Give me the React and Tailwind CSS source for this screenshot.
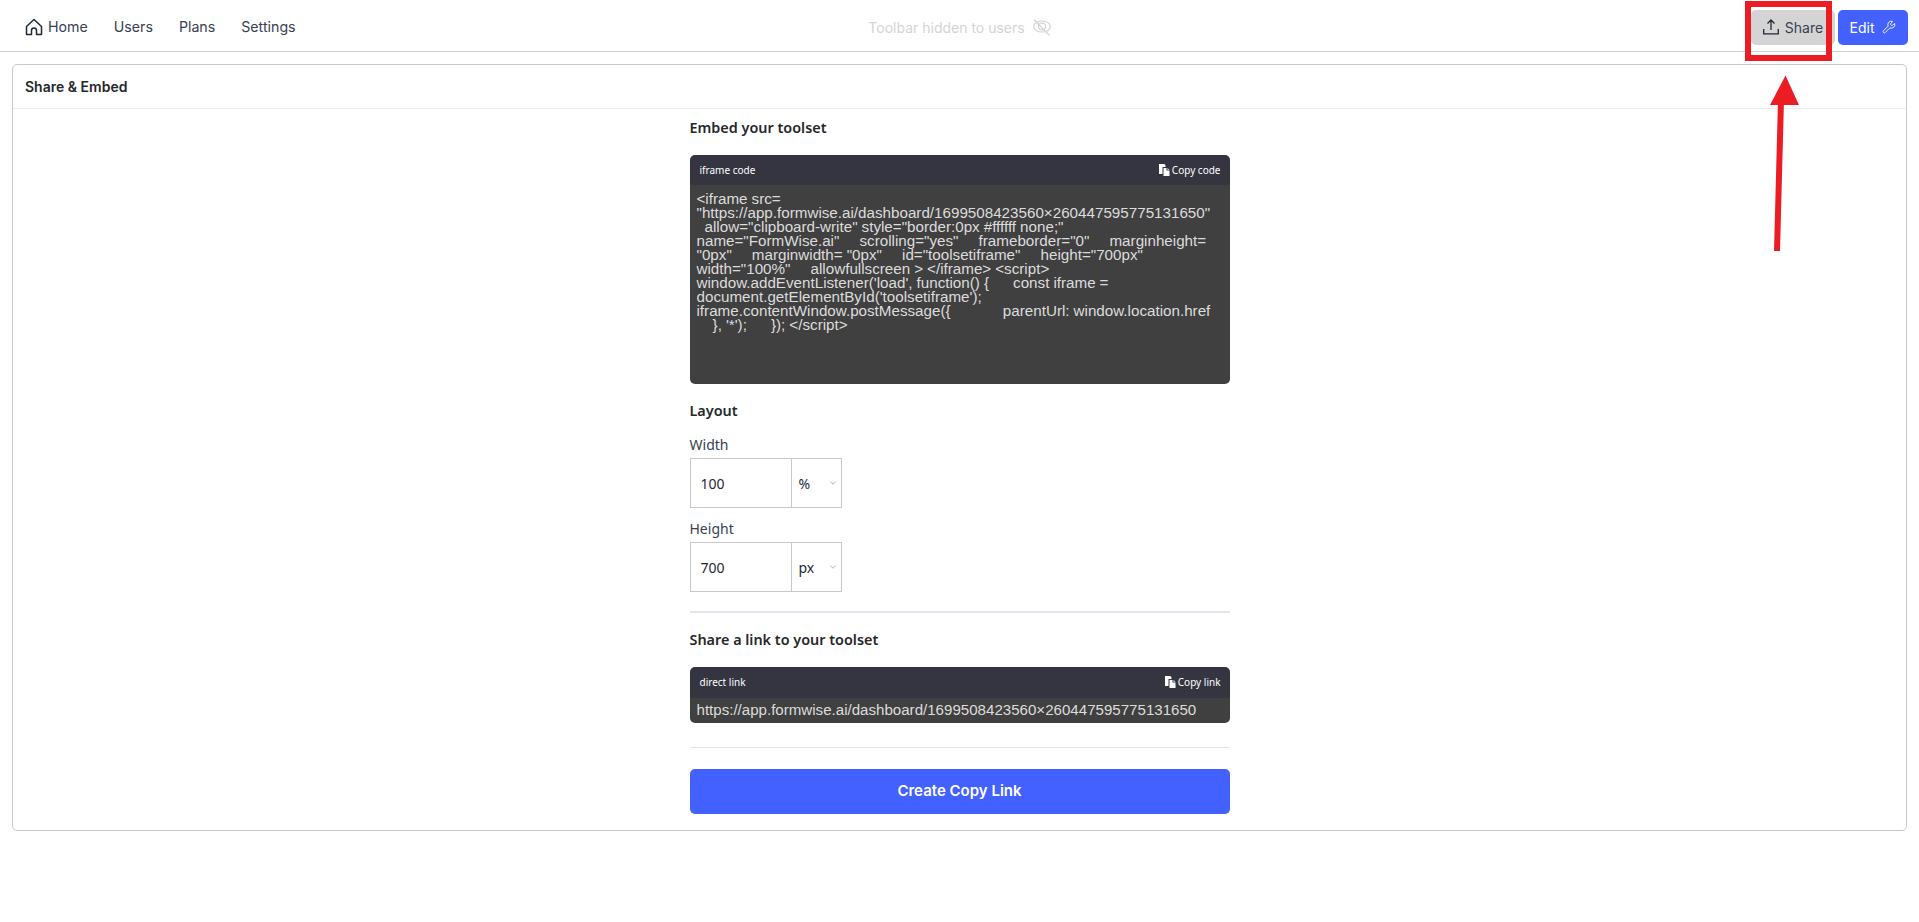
import React from "react";
import { Wrench, ChevronDown } from "lucide-react";

const codeLines = [
    `<iframe src=`,
    `"https://app.formwise.ai/dashboard/1699508423560×260447595775131650"`,
    `  allow="clipboard-write" style="border:0px #ffffff none;"`,
    `name="FormWise.ai"     scrolling="yes"     frameborder="0"     marginheight=`,
    `"0px"     marginwidth= "0px"     id="toolsetiframe"     height="700px"`,
    `width="100%"     allowfullscreen > </iframe> <script>`,
    `window.addEventListener('load', function() {      const iframe =`,
    `document.getElementById('toolsetiframe');`,
    `iframe.contentWindow.postMessage({             parentUrl: window.location.href`,
    `    }, '*');      }); </script>`,
];

function HomeIcon() {
    return (
        <svg width="18" height="18" viewBox="0 0 18 18" fill="none" stroke="#1f2937" strokeWidth="1.5" strokeLinejoin="round" className="mr-[5px]">
            <path d="M1.500 8.500L9 1.500l7.500 7v8h-5V12.500a2.500 2.500 0 0 0-5 0v4h-5z" />
        </svg>
    );
}

function ShareIcon() {
    return (
        <svg width="16" height="16" viewBox="0 0 16 16" fill="none" stroke="#1f2937" strokeWidth="1.3">
            <path d="M8 11V1M4.500 4.500L8 1l3.500 3.500" />
            <path d="M.7 10v4.800h14.600V10" />
        </svg>
    );
}

function HiddenIcon() {
    return (
        <svg width="18" height="17" viewBox="0 0 18 17" fill="none" stroke="#d4d4d4" strokeWidth="1.2">
            <ellipse cx="9" cy="7.500" rx="8.300" ry="5.500" />
            <ellipse cx="9" cy="7.500" rx="3.500" ry="3.300" />
            <path d="M1 .5l15.500 16" />
        </svg>
    );
}

function CopyIcon() {
    return (
        <svg width="11" height="12" viewBox="0 0 11 12" fill="currentColor">
            <path d="M0 0h5.500l1 1.500v1.500H3.500v7H0z" />
            <path d="M4.500 4h3v2.500H10.500V12H4.500z" />
            <path d="M8.500 4l2 1.700h-2z" />
        </svg>
    );
}

function CodeBox({ label, copy, headerHeight, children }) {
    return (
        <div className="rounded-[5px] overflow-hidden">
            <div className={`${headerHeight} bg-[#343541] flex items-center justify-between pl-[10px] pr-[9px] text-white text-[10px] font-['Noto_Sans',sans-serif]`}>
                <span>{label}</span>
                <span className="flex items-center gap-[2px]"><CopyIcon />{copy}</span>
            </div>
            <div className="bg-[#404040] text-[#dcdcdc] text-[15.2px] leading-[14px] font-['Liberation_Sans',sans-serif] pl-[7px]">
                {children}
            </div>
        </div>
    );
}

function SizeField({ label, value, unit }) {
    return (
        <div>
            <div className="text-[14px] leading-[20px] text-[#374151] font-['Noto_Sans',sans-serif]">{label}</div>
            <div className="mt-[3px] flex w-[152px] h-[50px] border border-[#c8c8c8] text-[14px] text-[#1f2937] font-['Noto_Sans',sans-serif]">
                <div className="w-[101px] border-r border-[#c8c8c8] flex items-center pl-[10px]">{value}</div>
                <div className="flex-1 flex items-center justify-between pl-[7px] pr-[3px]">
                    {unit}
                    <ChevronDown size={10} className="text-[#9ca3af]" />
                </div>
            </div>
        </div>
    );
}

export default function App() {
    return (
        <div className="relative min-h-[922px] bg-white font-['Inter',sans-serif] overflow-hidden">
            <header className="h-[52px] pt-[3px] border-b border-[#cfcfcf] flex items-center justify-between pl-[25px] pr-[11px]">
                <nav className="flex items-center text-[14.2px] text-[#374151] w-[500px]">
                    <HomeIcon />
                    <span>Home</span>
                    <span className="ml-[26px]">Users</span>
                    <span className="ml-[26px]">Plans</span>
                    <span className="ml-[26px]">Settings</span>
                </nav>
                <div className="flex items-center gap-[8px] text-[14px] text-[#d4d4d4] -translate-x-[7px]">
                    Toolbar hidden to users
                    <HiddenIcon />
                </div>
                <div className="flex items-center justify-end gap-[3px] w-[500px] text-[14px]">
                    <button className="h-[35px] w-[84px] rounded-[5px] bg-[#d4d4d4] text-[#374151] flex items-center justify-center gap-[6px]">
                        <ShareIcon />
                        Share
                    </button>
                    <button className="h-[35px] w-[70px] rounded-[5px] bg-[#4361ff] text-white flex items-center justify-center gap-[8px]">
                        Edit
                        <Wrench size={14} strokeWidth={1.6} />
                    </button>
                </div>
            </header>

            <main className="mx-[12px] mt-[12px] h-[767px] rounded-[5px] border border-[#c8c8c8]">
                <div className="h-[44px] border-b border-[#eeeeee] flex items-center pl-[12px] text-[14px] font-semibold text-[#27272a]">
                    Share &amp; Embed
                </div>
                <div className="w-[540px] mx-auto pt-[9px] font-['Noto_Sans',sans-serif]">
                    <h2 className="text-[14.4px] leading-[20px] font-semibold text-[#27272a]">Embed your toolset</h2>
                    <div className="mt-[17px]">
                        <CodeBox label="iframe code" copy="Copy code" headerHeight="h-[30px]">
                            <div className="h-[199px] pt-[7px] whitespace-pre [word-spacing:-0.2px]">
                                {codeLines.map((line) => <div key={line}>{line}</div>)}
                            </div>
                        </CodeBox>
                    </div>
                    <h2 className="mt-[17px] text-[14.4px] leading-[20px] font-semibold text-[#27272a]">Layout</h2>
                    <div className="mt-[14px] flex flex-col gap-[11px]">
                        <SizeField label="Width" value="100" unit="%" />
                        <SizeField label="Height" value="700" unit="px" />
                    </div>
                    <div className="mt-[19px] h-[1.5px] bg-[#e2e5ee]" />
                    <h2 className="mt-[17px] text-[14.4px] leading-[20px] font-semibold text-[#27272a]">Share a link to your toolset</h2>
                    <div className="mt-[17px]">
                        <CodeBox label="direct link" copy="Copy link" headerHeight="h-[31px]">
                            <div className="h-[25px] flex items-center whitespace-pre text-[15.1px]">
                                https://app.formwise.ai/dashboard/1699508423560×260447595775131650
                            </div>
                        </CodeBox>
                    </div>
                    <div className="mt-[24px] h-[1.5px] bg-[#e2e5ee]" />
                    <button className="mt-[21px] w-full h-[45px] rounded-[5px] bg-[#4361ff] text-white text-[15px] font-semibold font-['Inter',sans-serif]">
                        Create Copy Link
                    </button>
                </div>
            </main>

            {/* annotation drawn on top of the screenshot */}
            <div className="absolute left-[1745px] top-[1px] w-[87px] h-[60px] border-[6px] border-[#ec1c24]" />
            <svg className="absolute left-[1760px] top-[70px]" width="60" height="190" viewBox="0 0 60 190">
                <path d="M25.500 5.500L39 35H10z" fill="#ec1c24" />
                <path d="M21 30L17 181" stroke="#ec1c24" strokeWidth="6" />
            </svg>
        </div>
    );
}
